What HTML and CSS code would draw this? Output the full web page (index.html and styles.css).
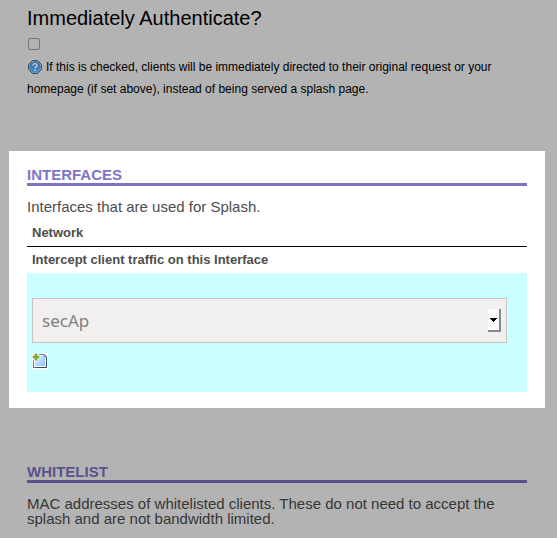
FILE: index.html
```html
<!DOCTYPE html>
<html lang="en">
<head>
<meta charset="utf-8">
<title>Splash settings</title>
<link rel="stylesheet" href="styles.css">
</head>
<body>
<main class="page">
  <section class="option">
    <label class="option-title" for="auth">Immediately Authenticate?</label>
    <input class="tick" type="checkbox" id="auth">
    <p class="hint"><svg class="help-icon" viewBox="0 0 14 14" aria-hidden="true">
      <defs><linearGradient id="ball" x1="0" y1="0" x2="0" y2="1"><stop offset="0" stop-color="#3a6a9a"/><stop offset="1" stop-color="#4d8fc4"/></linearGradient></defs>
      <path d="M4.500 .5h5l4 4v5l-4 4h-5l-4-4v-5z" fill="#7c97b2" stroke="#34516e"/>
      <circle cx="7" cy="7" r="5.500" fill="url(#ball)"/>
      <path d="M5 5.400C5 3 9 3 9 5.300 9 6.700 7 6.600 7 8.300M7 9.600v1.400" fill="none" stroke="#c3ced8" stroke-width="1.400"/>
    </svg>If this is checked, clients will be immediately directed to their original request or your homepage (if set above), instead of being served a splash page.</p>
  </section>

  <section class="group group-active">
    <h2 class="group-title">INTERFACES</h2>
    <p class="group-text">Interfaces that are used for Splash.</p>
    <table class="fields">
      <tr class="head-row"><th>Network</th></tr>
      <tr class="label-row"><th><label for="iface">Intercept client traffic on this Interface</label></th></tr>
      <tr>
        <td>
          <div class="picker">
            <select class="picker-select" id="iface"><option>secAp</option></select>
            <span class="picker-button" aria-hidden="true"><svg class="picker-arrow" viewBox="0 0 7 4"><path d="M0 0h7v1H6v1H5v1H4v1H3V3H2V2H1V1H0z"/></svg></span>
          </div>
          <button class="add" type="button" aria-label="Add">
            <svg class="add-icon" viewBox="0 0 16 16" aria-hidden="true">
              <defs>
                <linearGradient id="sheet" x1="0" y1="0" x2="1" y2="1"><stop offset="0" stop-color="#e4f1ff"/><stop offset="1" stop-color="#8fc2fb"/></linearGradient>
                <linearGradient id="edge" x1="0" y1="0" x2="1" y2="1"><stop offset="0" stop-color="#7d9fc8"/><stop offset="1" stop-color="#263a55"/></linearGradient>
              </defs>
              <path d="M0 0h16v16H0z" fill="#fff"/>
              <path d="M1.500 1.500h11l2 2v11h-13z" fill="#fff" stroke="url(#edge)"/>
              <path d="M3 3h8l2 2v8H3z" fill="url(#sheet)"/>
              <path d="M12 1v3h3" fill="none" stroke="#5680b4"/>
              <path d="M0 0h7v2h1v3H7v1H6v1H0z" fill="#fff" opacity=".8"/>
              <path d="M3 1h2v2h2v2H5v2H3V5H1V3h2z" fill="#7cb82c" stroke="#5c9a1c" stroke-width=".5"/>
            </svg>
          </button>
        </td>
      </tr>
    </table>
  </section>

  <section class="group group-dim">
    <h2 class="group-title">WHITELIST</h2>
    <p class="group-text">MAC addresses of whitelisted clients. These do not need to accept the splash and are not bandwidth limited.</p>
  </section>
</main>
</body>
</html>
```
FILE: styles.css
```css
* {
  box-sizing: border-box;
}

body {
  margin: 0;
  background: #b3b3b3;
  color: #000;
  font-family: "Liberation Sans", Arial, sans-serif;
}

.page {
  padding: 6px 12px 0 9px;
}

.option {
  padding: 0 18px 51px;
}

.option-title {
  display: block;
  font-size: 20px;
  line-height: 24px;
}

.tick {
  display: block;
  appearance: none;
  width: 12px;
  height: 12px;
  margin: 8px 0 6px 1px;
  border: 1px solid #777;
  border-radius: 2px;
}

.hint {
  margin: 0;
  font-size: 12px;
  line-height: 22px;
}

.help-icon {
  width: 14px;
  height: 14px;
  margin: 0 4px 2px 1px;
  vertical-align: middle;
}

.group {
  padding: 16px 18px;
}

.group-active {
  background: #fff;
  color: #4d4d4d;
}

.group-dim {
  margin-top: 40px;
  color: #363636;
}

.group-title {
  margin: 0 0 13px;
  border-bottom: 3px solid #8074c9;
  color: #8074c9;
  font-size: 15px;
  line-height: 16px;
}

.group-dim .group-title {
  border-color: #5a518d;
  color: #5a518d;
}

.group-text {
  margin: 0 0 6px;
  font-size: 15px;
  line-height: 15px;
}

.fields {
  width: 100%;
  border-collapse: collapse;
  font-size: 13px;
}

.fields th {
  height: 26px;
  padding: 0 5px;
  text-align: left;
}

.fields .head-row {
  border-bottom: 1px solid #000;
}

.fields .label-row th {
  height: 27px;
}

.fields td {
  padding: 25px 20px 23px 5px;
  background: #cff;
}

.picker {
  display: grid;
  align-items: center;
  margin-bottom: 10px;
}

.picker-select {
  grid-area: 1 / 1;
  appearance: none;
  width: 100%;
  height: 45px;
  padding: 0 9px;
  border: 1px solid #c8c4c8;
  border-radius: 0;
  background: #f2f0ef;
  color: #808080;
  font-family: "Noto Sans", sans-serif;
  font-size: 17px;
}

.picker-button {
  grid-area: 1 / 1;
  justify-self: end;
  display: flex;
  align-items: center;
  justify-content: center;
  width: 13px;
  height: 23px;
  margin-right: 6px;
  border: solid #888;
  border-width: 0 2px 2px 0;
  background: #fbfbfa;
  pointer-events: none;
}

.picker-arrow {
  width: 7px;
  height: 4px;
}

.add {
  display: block;
  padding: 0;
  border: 0;
  background: none;
}

.add-icon {
  display: block;
  width: 16px;
  height: 16px;
}
```
